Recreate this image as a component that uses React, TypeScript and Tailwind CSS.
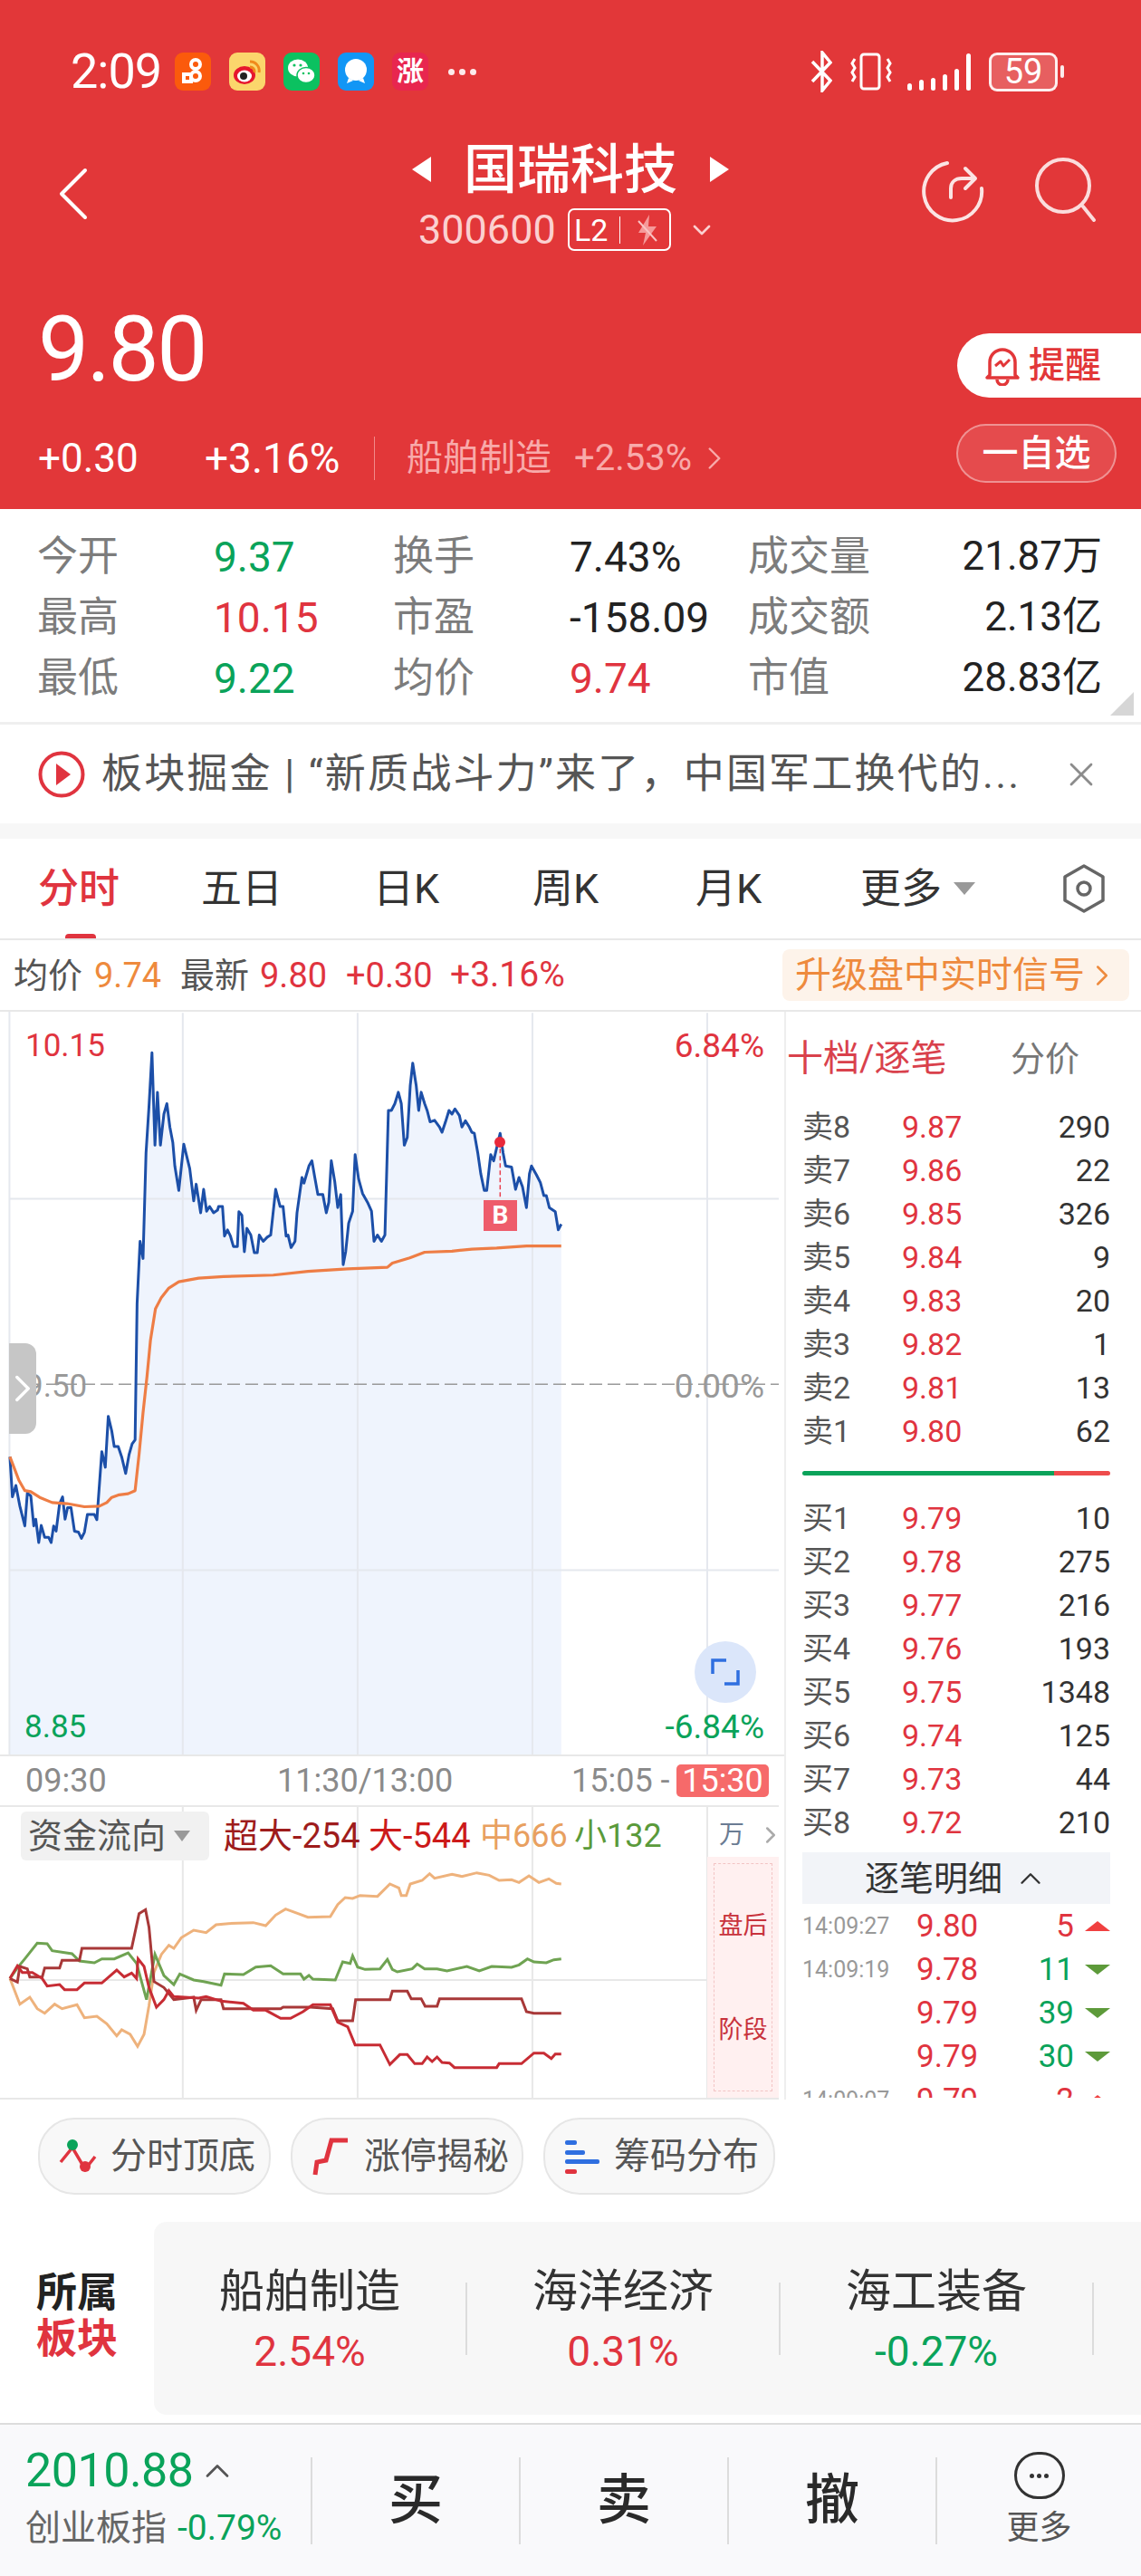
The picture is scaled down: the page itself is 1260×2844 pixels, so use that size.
import { ChevronRight, ChevronUp, ChevronDown, X } from "lucide-react";

const BLUE = "20,885 25,962 32,940 40,980 50,1018 55,955 62,960 68,1018 72,1005 78,1050 83,1017 90,1040 98,1040 103,1050 108,1018 113,1028 120,975 126,962 131,1005 136,983 143,983 150,1028 158,1030 164,1042 170,1030 176,996 190,996 195,1006 205,875 212,905 218,807 225,835 230,865 238,865 245,885 253,917 260,880 266,860 272,852 276,590 282,470 288,503 294,300 300,210 306,107 312,285 317,183 323,285 330,225 336,205 342,250 348,280 352,325 360,372 370,283 382,330 390,392 395,360 404,415 410,370 416,412 422,403 430,415 438,410 440,403 448,403 452,460 458,448 464,460 470,480 478,480 481,413 487,420 492,490 497,445 505,458 512,492 518,492 522,458 530,470 538,462 545,458 555,370 564,403 570,403 576,460 580,458 586,482 594,470 598,415 608,347 612,358 622,325 628,315 634,348 640,380 650,380 657,415 662,395 667,315 674,355 680,405 686,380 691,515 696,490 702,435 710,412 715,303 722,350 730,378 740,395 748,412 753,470 760,458 768,470 775,458 782,218 788,218 795,205 802,183 808,205 814,285 820,270 826,170 831,127 838,170 843,218 848,183 855,205 860,218 866,240 875,237 885,250 890,260 897,240 904,218 910,225 916,215 925,228 930,250 937,238 945,250 950,260 955,262 962,300 968,340 975,372 980,372 988,303 994,315 1000,290 1007,262 1013,300 1018,325 1030,327 1038,370 1045,347 1052,365 1060,405 1066,340 1070,325 1080,342 1088,357 1095,382 1100,382 1106,405 1118,413 1124,448 1130,437";
const AVG = "20,885 28,905 38,930 50,950 62,952 80,963 105,973 135,975 170,981 200,980 215,973 225,963 240,958 258,956 272,950 280,880 288,800 296,730 303,660 313,600 325,578 340,560 360,548 400,541 450,538 550,535 620,528 700,523 780,520 790,512 825,502 855,491 910,489 950,485 1000,483 1060,479 1130,479";
const FLOW_MID = "20,610 40,695 60,672 75,710 90,725 110,695 125,710 155,697 170,740 195,735 215,760 235,800 245,780 262,795 277,835 290,795 300,700 310,590 325,530 340,500 350,510 365,475 390,450 415,458 435,432 460,428 510,425 535,435 555,400 575,380 600,395 620,407 665,405 680,365 695,342 710,345 725,335 760,338 785,297 803,310 808,335 818,335 826,297 850,285 865,263 875,278 910,265 930,272 960,260 985,268 1005,285 1030,283 1045,292 1065,270 1085,292 1105,280 1120,295 1130,297";
const FLOW_SMALL = "20,610 35,575 50,545 75,493 95,495 105,518 145,528 160,552 190,558 205,545 230,545 258,525 275,560 295,680 312,530 330,600 350,630 362,595 390,615 410,620 445,632 452,595 490,597 515,572 545,568 570,595 605,595 612,612 622,600 630,612 675,615 690,555 705,560 710,535 720,572 735,580 765,578 780,547 790,580 800,588 830,578 840,562 855,578 880,578 900,585 940,570 965,585 990,570 1030,573 1045,565 1062,545 1075,555 1100,558 1115,548 1130,545";
const FLOW_XL = "20,610 35,622 40,570 55,578 60,605 85,605 90,575 120,575 125,550 160,550 165,510 265,510 280,395 293,382 300,440 310,620 330,640 350,680 390,672 395,715 405,680 445,680 450,710 505,710 565,710 570,705 625,705 670,710 680,750 710,750 716,680 785,680 790,652 820,652 828,677 848,677 856,702 880,702 885,677 1050,677 1060,720 1075,725 1130,725";
const FLOW_L = "20,610 35,568 45,590 65,590 85,610 95,635 120,630 130,647 155,647 170,625 205,625 235,582 250,605 265,592 275,610 278,545 290,570 300,640 315,705 330,680 340,650 350,670 400,675 415,670 445,685 490,692 510,715 535,715 565,742 585,742 610,720 630,697 665,697 680,755 700,770 715,830 765,830 785,895 805,862 820,862 835,892 850,892 860,870 870,885 880,870 890,888 905,890 915,905 1000,905 1005,892 1050,892 1075,857 1095,857 1110,875 1118,860 1130,860";

const SELLS = [
  ["卖8", "9.87", "290"], ["卖7", "9.86", "22"], ["卖6", "9.85", "326"], ["卖5", "9.84", "9"],
  ["卖4", "9.83", "20"], ["卖3", "9.82", "1"], ["卖2", "9.81", "13"], ["卖1", "9.80", "62"],
];
const BUYS = [
  ["买1", "9.79", "10"], ["买2", "9.78", "275"], ["买3", "9.77", "216"], ["买4", "9.76", "193"],
  ["买5", "9.75", "1348"], ["买6", "9.74", "125"], ["买7", "9.73", "44"], ["买8", "9.72", "210"],
];
const TICKS = [
  ["14:09:27", "9.80", "5", "up"], ["14:09:19", "9.78", "11", "down"], ["", "9.79", "39", "down"],
  ["", "9.79", "30", "down"], ["14:09:07", "9.79", "2", "up"],
];
const STATS = [
  ["今开", "9.37", "text-[#0aa35a]", "换手", "7.43%", "text-[#222]", "成交量", "21.87万"],
  ["最高", "10.15", "text-[#e0343f]", "市盈", "-158.09", "text-[#222]", "成交额", "2.13亿"],
  ["最低", "9.22", "text-[#0aa35a]", "均价", "9.74", "text-[#e0343f]", "市值", "28.83亿"],
];
const SECTORS = [
  ["船舶制造", "2.54%", "text-[#e0343f]"],
  ["海洋经济", "0.31%", "text-[#e0343f]"],
  ["海工装备", "-0.27%", "text-[#0aa35a]"],
];

function AppIcon({ className, children }: { className: string; children: React.ReactNode }) {
  return <div className={`w-[40px] h-[42px] rounded-[9px] flex items-center justify-center overflow-hidden ${className}`}>{children}</div>;
}

function StatusBar() {
  return (
    <div className="h-[158px] flex items-center pl-[78px] pr-[85px] text-white">
      <span className="text-[54px] leading-none w-[115px] tracking-[-1px]">2:09</span>
      <div className="flex gap-[20px]">
        <AppIcon className="bg-[#fb5a0c]">
          <svg width="26" height="32" viewBox="0 0 26 32" fill="none" stroke="#fff" strokeWidth="4">
            <circle cx="16" cy="8" r="5" /><circle cx="16" cy="21" r="5" /><path d="M11 19H3v8h8z" />
          </svg>
        </AppIcon>
        <AppIcon className="bg-[#fbd66c]">
          <svg width="34" height="34" viewBox="0 0 34 34">
            <ellipse cx="14" cy="21" rx="12" ry="10" fill="#e6162d" />
            <ellipse cx="14" cy="22" rx="8" ry="6.5" fill="#fff" />
            <circle cx="13" cy="22" r="4" fill="#222" />
            <path d="M20 6a10 10 0 0 1 10 12" fill="none" stroke="#f08a1c" strokeWidth="3" />
            <path d="M20 12a5 5 0 0 1 5 6" fill="none" stroke="#f08a1c" strokeWidth="3" />
          </svg>
        </AppIcon>
        <AppIcon className="bg-[#0bc160]">
          <svg width="32" height="30" viewBox="0 0 32 30" fill="#fff">
            <ellipse cx="12" cy="11" rx="11" ry="9.5" />
            <ellipse cx="21" cy="19" rx="10" ry="8.5" stroke="#0bc160" strokeWidth="1.5" />
            <circle cx="8" cy="8" r="1.6" fill="#0bc160" /><circle cx="15" cy="8" r="1.6" fill="#0bc160" />
            <circle cx="18" cy="17" r="1.3" fill="#0bc160" /><circle cx="24" cy="17" r="1.3" fill="#0bc160" />
          </svg>
        </AppIcon>
        <AppIcon className="bg-[#1296f5]">
          <svg width="30" height="32" viewBox="0 0 30 32" fill="#fff">
            <circle cx="15" cy="14" r="12" />
            <path d="M7 23l-2 6 7-3z" /><path d="M23 23l2 6-7-3z" />
          </svg>
        </AppIcon>
        <AppIcon className="bg-[#e8264f]">
          <span className="text-[30px] leading-none font-bold text-white">涨</span>
        </AppIcon>
      </div>
      <div className="ml-[22px] flex gap-[5px]">
        <div className="w-[7px] h-[7px] rounded-full bg-white/90" />
        <div className="w-[7px] h-[7px] rounded-full bg-white/90" />
        <div className="w-[7px] h-[7px] rounded-full bg-white/90" />
      </div>
      <div className="ml-auto flex items-center">
        <svg width="24" height="46" viewBox="0 0 24 46" fill="none" stroke="#fff" strokeWidth="3.5">
          <path d="M2 12l20 21-9 11V2l9 11L2 34" />
        </svg>
        <svg className="ml-[18px]" width="50" height="44" viewBox="0 0 50 44" fill="none" stroke="#fff" strokeWidth="3">
          <rect x="14" y="3" width="20" height="38" rx="3" />
          <path d="M7 8l-3 5 3 5-3 5 3 5-3 5M43 8l3 5-3 5 3 5-3 5 3 5" />
        </svg>
        <div className="ml-[15px] flex items-end gap-[8px] h-[42px] w-[74px]">
          {[8, 12, 14, 18, 24, 41].map((h, i) => (
            <div key={i} className="w-[5px] bg-white rounded-full" style={{ height: h }} />
          ))}
        </div>
        <div className="ml-[16px] w-[76px] h-[43px] rounded-[9px] border-[3px] border-white/90 bg-white/20 flex items-center justify-center text-[38px] leading-none">59</div>
        <div className="ml-[3px] w-[4px] h-[14px] bg-white/90 rounded-full" />
      </div>
    </div>
  );
}

function Header() {
  return (
    <div className="h-[562px] bg-[#e23739] text-white">
      <StatusBar />
      <div className="h-[132px] grid grid-cols-[1fr_350px_1fr]">
        <div className="pl-[64px] pt-[27px]">
          <svg width="34" height="58" viewBox="0 0 34 58" fill="none" stroke="#fff" strokeWidth="4" strokeLinecap="round" strokeLinejoin="round">
            <path d="M30 3L4 29l26 26" />
          </svg>
        </div>
        <div className="flex flex-col items-center -mt-[1px]">
          <div className="h-[60px] flex items-center justify-between w-full">
            <div className="w-0 h-0 border-y-[14px] border-y-transparent border-r-[21px] border-r-white" />
            <span className="text-[59px] leading-none font-medium">国瑞科技</span>
            <div className="w-0 h-0 border-y-[14px] border-y-transparent border-l-[21px] border-l-white" />
          </div>
          <div className="mt-[13px] flex items-center self-start pl-[7px] h-[47px]">
            <span className="text-[45px] leading-none text-[#fbd0d0] w-[165px]">300600</span>
            <div className="w-[114px] h-[47px] rounded-[7px] border-2 border-white flex items-center">
              <span className="ml-[5px] text-[34px] leading-none w-[50px]">L2</span>
              <div className="w-[1px] h-[30px] bg-white" />
              <svg className="ml-[17px]" width="26" height="36" viewBox="0 0 26 36" fill="#f59a9a">
                <path d="M15 1L3 21h8L8 35l15-21h-9z" />
                <path d="M3 8l20 22" stroke="#f9c4c4" strokeWidth="2" />
              </svg>
            </div>
            <ChevronDown className="ml-[18px] text-[#fbd0d0]" size={32} strokeWidth={2} />
          </div>
        </div>
        <div className="flex justify-end pr-[48px] pt-[18px] gap-[54px]">
          <svg width="70" height="70" viewBox="0 0 70 70" fill="none" stroke="#fbe4e4" strokeWidth="4" strokeLinecap="round" strokeLinejoin="round">
            <path d="M28 4A32 32 0 1 0 66 32" />
            <path d="M32 42V32c0-7 5-11 12-11h14" />
            <path d="M48 10l11 11-11 11" />
          </svg>
          <svg width="70" height="72" viewBox="0 0 70 72" fill="none" stroke="#fbdcdc" strokeWidth="4" strokeLinecap="round" className="-mt-[3px]">
            <circle cx="32" cy="32" r="29" />
            <path d="M54 55l12 15" />
          </svg>
        </div>
      </div>
      <div className="h-[272px] flex justify-between">
        <div className="pl-[42px]">
          <div className="mt-[46px] h-[100px] flex items-center text-[100px] leading-none tracking-[-2.5px]">9.80</div>
          <div className="mt-[40px] h-[60px] flex items-center text-[44px] leading-none">
            <span className="w-[184px]">+0.30</span>
            <span className="w-[187px] text-[46px]">+3.16%</span>
            <div className="w-[1px] h-[48px] bg-[#f28a8a]" />
            <span className="ml-[35px] text-[40px] text-[#f8aaaa] w-[185px]">船舶制造</span>
            <span className="text-[40px] text-[#f8aaaa] w-[140px]">+2.53%</span>
            <ChevronRight className="-ml-[6px] text-[#f8aaaa]" size={42} strokeWidth={1.4} />
          </div>
        </div>
        <div className="flex flex-col items-end pt-[78px] gap-[29px]">
          <div className="w-[203px] h-[71px] bg-white rounded-l-full flex items-center pl-[30px] text-[#e23739] text-[40px] leading-none font-medium">
            <svg width="40" height="44" viewBox="0 0 40 44" fill="none" stroke="#e23739" strokeWidth="3.5" strokeLinejoin="round">
              <path d="M6 32V18a14 14 0 0 1 28 0v14l3 3H3z" />
              <path d="M14 37a6 6 0 0 0 12 0" />
              <path d="M12 22l6-5 3 5 7-7" strokeWidth="3" />
            </svg>
            <span className="ml-[9px]">提醒</span>
          </div>
          <div className="mr-[27px] w-[177px] h-[65px] rounded-full border-2 border-white/40 bg-white/10 flex items-center justify-center text-[40px] leading-none font-medium">
            <span>一自选</span>
          </div>
        </div>
      </div>
    </div>
  );
}

function Stats() {
  return (
    <div className="relative h-[238px] pt-[19px] pl-[41px] pr-[43px] border-b-[3px] border-[#efefef]">
      {STATS.map((r) => (
        <div key={r[0]} className="h-[67px] grid grid-cols-[195px_198px_195px_199px_1fr] items-center text-[46px] leading-none">
          <span className="text-[45px] text-[#7c7c7c]">{r[0]}</span>
          <span className={r[2]}>{r[1]}</span>
          <span className="text-[45px] text-[#7c7c7c]">{r[3]}</span>
          <span className={r[5]}>{r[4]}</span>
          <div className="flex justify-between">
            <span className="text-[45px] text-[#7c7c7c] -ml-[2px]">{r[6]}</span>
            <span className="text-[44px] text-[#222] whitespace-nowrap">{r[7]}</span>
          </div>
        </div>
      ))}
      <div className="absolute right-[8px] bottom-[7px] w-0 h-0 border-b-[26px] border-b-[#d6d6d6] border-l-[26px] border-l-transparent" />
    </div>
  );
}

function News() {
  return (
    <div className="h-[109px] flex items-center pl-[42px] pr-[44px]">
      <svg width="52" height="52" viewBox="0 0 52 52" fill="none">
        <circle cx="26" cy="26" r="23.5" stroke="#e0343f" strokeWidth="4" />
        <path d="M20 14l16 12-16 12z" fill="#e0343f" />
      </svg>
      <span className="ml-[18px] text-[45px] leading-none tracking-[2.2px] text-[#555] whitespace-nowrap">板块掘金 | “新质战斗力”来了，中国军工换代的...</span>
      <X className="ml-auto text-[#8c8c8c]" size={44} strokeWidth={1.5} />
    </div>
  );
}

function Tabs() {
  return (
    <div className="relative h-[112px] pl-[42px] flex items-center border-b-2 border-[#e8e8e8] text-[#333] text-[45px] leading-none">
      <span className="w-[180px] text-[#e0343f] font-medium">分时</span>
      <span className="w-[190px]">五日</span>
      <span className="w-[176px]">日K</span>
      <span className="w-[180px]">周K</span>
      <span className="w-[182px]">月K</span>
      <div className="w-[223px] flex items-center">
        <span>更多</span>
        <div className="ml-[13px] w-0 h-0 border-x-[12px] border-x-transparent border-t-[14px] border-t-[#999]" />
      </div>
      <svg width="48" height="54" viewBox="0 0 48 54" fill="none" stroke="#666" strokeWidth="3.5">
        <path d="M24 2l21 12v26L24 52 3 40V14z" strokeLinejoin="round" />
        <circle cx="24" cy="27" r="7" />
      </svg>
      <div className="absolute left-[72px] bottom-0 w-[34px] h-[5px] bg-[#e0343f] rounded-t-sm" />
    </div>
  );
}

function InfoLine() {
  return (
    <div className="h-[79px] flex items-center pl-[15px] pr-[13px] border-b-2 border-[#e8e8e8] text-[38px] leading-none whitespace-nowrap">
      <span className="w-[89px] text-[#555]">均价</span>
      <span className="w-[95px] text-[#ee8a3d]">9.74</span>
      <span className="w-[88px] text-[#555]">最新</span>
      <span className="w-[95px] text-[#e0343f]">9.80</span>
      <span className="w-[115px] text-[#e0343f]">+0.30</span>
      <span className="text-[#e0343f] text-[39px]">+3.16%</span>
      <div className="ml-auto w-[383px] h-[57px] rounded-[8px] bg-[#fdf3ea] flex items-center pl-[14px] text-[#ee8a3d] text-[40px]">
        <span>升级盘中实时信号</span>
        <ChevronRight size={38} strokeWidth={1.6} />
      </div>
    </div>
  );
}

function PriceChart() {
  return (
    <div className="relative w-[860px] h-[820px]">
      <svg className="absolute inset-0 w-full h-full" viewBox="0 28 1568 1430" preserveAspectRatio="none">
        <polygon points={`${BLUE} 1130,1458 20,1458`} fill="#eff4fd" />
        <g stroke="#e5e8ee" strokeWidth="2">
          {[368, 720, 1072, 1424].map((x) => (
            <line key={x} x1={x} y1="30" x2={x} y2="1458" vectorEffect="non-scaling-stroke" />
          ))}
          {[388, 1103].map((y) => (
            <line key={y} x1="20" y1={y} x2="1568" y2={y} vectorEffect="non-scaling-stroke" />
          ))}
          <line x1="19" y1="28" x2="19" y2="1458" vectorEffect="non-scaling-stroke" />
        </g>
        <line x1="20" y1="745" x2="1568" y2="745" stroke="#999" strokeWidth="1.5" strokeDasharray="14 6" vectorEffect="non-scaling-stroke" />
        <polyline points={BLUE} fill="none" stroke="#1c4fa8" strokeWidth="3" strokeLinejoin="round" vectorEffect="non-scaling-stroke" />
        <polyline points={AVG} fill="none" stroke="#ee7d45" strokeWidth="3.2" strokeLinejoin="round" vectorEffect="non-scaling-stroke" />
        <line x1="1007" y1="278" x2="1007" y2="385" stroke="#e9404e" strokeWidth="1.5" strokeDasharray="5 3" vectorEffect="non-scaling-stroke" />
      </svg>
      <span className="absolute left-[28px] top-[20px] text-[35px] leading-none text-[#e0343f]">10.15</span>
      <span className="absolute right-[16px] top-[19px] text-[37px] leading-none text-[#e0343f]">6.84%</span>
      <span className="absolute left-[28px] top-[396px] text-[35px] leading-none text-[#999]">9.50</span>
      <span className="absolute right-[16px] top-[395px] text-[37px] leading-none text-[#999]">0.00%</span>
      <span className="absolute left-[27px] top-[772px] text-[35px] leading-none text-[#0aa35a]">8.85</span>
      <span className="absolute right-[16px] top-[771px] text-[37px] leading-none text-[#0aa35a]">-6.84%</span>
      <div className="absolute left-[10px] top-[366px] w-[30px] h-[100px] bg-[#c6c6c6] rounded-r-[12px] flex items-center justify-center">
        <ChevronRight className="text-white shrink-0" size={50} strokeWidth={1.6} />
      </div>
      <div className="absolute left-[546px] top-[138px] w-[12px] h-[12px] rounded-full bg-[#e9293a]" />
      <div className="absolute left-[534px] top-[208px] w-[37px] h-[34px] bg-[#ee5c6b] flex items-center justify-center text-white text-[28px] leading-none font-bold">B</div>
      <div className="absolute left-[767px] top-[695px] w-[68px] h-[68px] rounded-full bg-[#dbe6fa] flex items-center justify-center">
        <svg width="32" height="32" viewBox="0 0 32 32" fill="none" stroke="#2f6fe0" strokeWidth="3.5">
          <path d="M2 18V3h15M30 14v15H15" />
        </svg>
      </div>
    </div>
  );
}

function TimeAxis() {
  return (
    <div className="relative h-[56px] flex items-center pl-[28px] pr-[10px] border-t-2 border-[#e8e8e8] text-[36px] leading-none text-[#8a8a8a]">
      <span className="w-[278px]">09:30</span>
      <span className="w-[325px]">11:30/13:00</span>
      <span className="w-[116px] whitespace-nowrap">15:05 -</span>
      <span className="w-[102px] h-[36px] rounded-[5px] bg-[#f66a6a] text-white flex items-center justify-center">15:30</span>
    </div>
  );
}

function FundFlow() {
  return (
    <div className="relative h-[325px] w-[860px] border-y-2 border-[#e8e8e8] overflow-hidden">
      <svg className="absolute left-0 top-[-14px] w-[860px] h-[400px]" viewBox="0 0 1568 1200" preserveAspectRatio="none">
        <g stroke="#e8e8e8" strokeWidth="2">
          {[368, 720, 1072].map((x) => (
            <line key={x} x1={x} y1="40" x2={x} y2="1010" vectorEffect="non-scaling-stroke" />
          ))}
          <line x1="1424" y1="40" x2="1424" y2="1010" vectorEffect="non-scaling-stroke" />
          <line x1="18" y1="615" x2="1424" y2="615" vectorEffect="non-scaling-stroke" />
        </g>
        <polyline points={FLOW_MID} fill="none" stroke="#eeb27c" strokeWidth="3" vectorEffect="non-scaling-stroke" />
        <polyline points={FLOW_SMALL} fill="none" stroke="#6fa352" strokeWidth="3" vectorEffect="non-scaling-stroke" />
        <polyline points={FLOW_XL} fill="none" stroke="#a83838" strokeWidth="3" vectorEffect="non-scaling-stroke" />
        <polyline points={FLOW_L} fill="none" stroke="#c72c34" strokeWidth="3" vectorEffect="non-scaling-stroke" />
      </svg>
      <div className="relative flex items-center pt-[5px] pl-[23px] h-[58px] text-[38px] leading-none whitespace-nowrap">
        <div className="w-[208px] h-[54px] rounded-[6px] bg-[#f1f1f1] flex items-center pl-[8px] text-[#555]">
          <span>资金流向</span>
          <div className="ml-[9px] w-0 h-0 border-x-[9px] border-x-transparent border-t-[12px] border-t-[#999]" />
        </div>
        <span className="ml-[16px] w-[160px] text-[#9e1c1c]">超大-254</span>
        <span className="w-[123px] text-[#cc1a1a]">大-544</span>
        <span className="w-[104px] text-[36px] text-[#e8a060]">中666</span>
        <span className="text-[36px] text-[#5a9a3a]">小132</span>
      </div>
      <span className="absolute left-[794px] top-[17px] text-[28px] leading-none text-[#6b7c93]">万</span>
      <ChevronRight className="absolute left-[836px] top-[16px] text-[#aaa]" size={30} strokeWidth={2} />
      <div className="absolute left-[781px] top-[55px] bottom-0 w-[79px] bg-[#fff0f0] p-[7px]">
        <div className="h-full border border-dashed border-[#f3c4c4] flex flex-col items-center text-[27px] leading-none text-[#c8323c]">
          <span className="mt-[55px]">盘后</span>
          <span className="mt-[88px]">阶段</span>
        </div>
      </div>
    </div>
  );
}

function Triangle({ dir }: { dir: string }) {
  if (dir === "up") {
    return <div className="w-0 h-0 border-x-[14px] border-x-transparent border-b-[11px] border-b-[#f04040]" />;
  }
  return <div className="w-0 h-0 border-x-[14px] border-x-transparent border-t-[11px] border-t-[#5d9a3a]" />;
}

function QuoteRow({ row }: { row: string[] }) {
  return (
    <div className="h-[48px] flex items-center text-[34px] leading-none">
      <span className="w-[110px] text-[#555]">{row[0]}</span>
      <span className="w-[86px] text-[#e0343f]">{row[1]}</span>
      <span className="flex-1 text-right text-[#333]">{row[2]}</span>
    </div>
  );
}

function OrderBook() {
  return (
    <div className="w-[394px] border-l-2 border-[#eeeeee] h-[1201px] overflow-hidden">
      <div className="h-[103px] pl-[1px] flex items-center text-[40px] leading-none">
        <span className="w-[247px] text-[#d9414c]">十档/逐笔</span>
        <span className="text-[38px] text-[#777]">分价</span>
      </div>
      <div className="pl-[18px] pr-[34px]">
        {SELLS.map((r) => <QuoteRow key={r[0]} row={r} />)}
      </div>
      <div className="mt-[20px] ml-[18px] mr-[32px] w-[340px] h-[5px] flex rounded-full overflow-hidden">
        <div className="w-[278px] bg-[#0aa35a]" />
        <div className="flex-1 bg-[#ee4c4c]" />
      </div>
      <div className="mt-[23px] pl-[18px] pr-[34px]">
        {BUYS.map((r) => <QuoteRow key={r[0]} row={r} />)}
      </div>
      <div className="mt-[9px] ml-[18px] w-[340px] h-[57px] bg-[#f2f4f8] flex items-center justify-center text-[38px] leading-none text-[#333]">
        <span>逐笔明细</span>
        <ChevronUp className="ml-[12px]" size={38} strokeWidth={1.5} />
      </div>
      <div className="h-[214px] overflow-hidden pl-[18px] pr-[34px]">
        {TICKS.map((t, i) => (
          <div key={i} className="h-[48px] flex items-center leading-none">
            <span className="w-[126px] text-[25px] text-[#999]">{t[0]}</span>
            <span className="w-[80px] text-[35px] text-[#e0343f]">{t[1]}</span>
            <span className={`flex-1 text-right text-[35px] ${t[3] === "up" ? "text-[#e0343f]" : "text-[#0aa35a]"}`}>{t[2]}</span>
            <div className="ml-[12px]"><Triangle dir={t[3]} /></div>
          </div>
        ))}
      </div>
    </div>
  );
}

function Shortcuts() {
  return (
    <div className="h-[135px] pt-[20px] pl-[42px] flex gap-[22px] items-start">
      <div className="w-[257px] h-[85px] rounded-[40px] border-2 border-[#e6e6e6] bg-[#f8f8f8] flex items-center pl-[20px] text-[40px] leading-none text-[#555]">
        <svg width="44" height="44" viewBox="0 0 44 44" fill="none" stroke="#e0343f" strokeWidth="3.5">
          <path d="M3 28l13-16 14 24 11-14" />
          <circle cx="16" cy="9" r="6" fill="#0aa35a" stroke="none" />
          <circle cx="30" cy="33" r="6" fill="#e0343f" stroke="none" />
        </svg>
        <span className="ml-[14px]">分时顶底</span>
      </div>
      <div className="w-[257px] h-[85px] rounded-[40px] border-2 border-[#e6e6e6] bg-[#f8f8f8] flex items-center pl-[22px] text-[40px] leading-none text-[#555]">
        <svg width="42" height="44" viewBox="0 0 42 44" fill="none" stroke="#e0343f" strokeWidth="5">
          <path d="M3 42l2-14 10-2 6-22h18" />
        </svg>
        <span className="ml-[15px]">涨停揭秘</span>
      </div>
      <div className="w-[256px] h-[85px] rounded-[40px] border-2 border-[#e6e6e6] bg-[#f8f8f8] flex items-center pl-[22px] text-[40px] leading-none text-[#555]">
        <svg width="40" height="40" viewBox="0 0 40 40">
          <rect x="0" y="2" width="13" height="5" rx="2" fill="#2f6fe0" />
          <rect x="0" y="13" width="22" height="5" rx="2" fill="#2f6fe0" />
          <rect x="0" y="23" width="38" height="5" rx="2" fill="#2f6fe0" />
          <rect x="0" y="34" width="13" height="5" rx="2" fill="#e0343f" />
        </svg>
        <span className="ml-[14px]">筹码分布</span>
      </div>
    </div>
  );
}

function Sectors() {
  return (
    <div className="h-[222px] flex items-start">
      <div className="w-[170px] h-[213px] pl-[40px] flex flex-col justify-center text-[45px] leading-[51px] font-bold">
        <span className="text-[#222] -mt-[5px]">所属</span>
        <span className="text-[#e0343f]">板块</span>
      </div>
      <div className="flex-1 h-[213px] rounded-l-[14px] bg-[#f7f7f7] flex items-center">
        {SECTORS.map((s) => (
          <div key={s[0]} className="w-[346px] h-[80px] flex flex-col items-center justify-between border-r-2 border-[#dcdcdc] leading-none">
            <span className="text-[50px] text-[#333] -mt-[15px]">{s[0]}</span>
            <span className={`text-[46px] -mb-[19px] ${s[2]}`}>{s[1]}</span>
          </div>
        ))}
      </div>
    </div>
  );
}

function Footer() {
  return (
    <div className="h-[170px] bg-[#f9f9fb] border-t-2 border-[#dcdcdc] flex items-start">
      <div className="w-[343px] h-[133px] pl-[28px] pt-[25px]">
        <div className="flex items-center text-[52px] leading-none text-[#0aa35a]">
          <span className="tracking-[-0.5px]">2010.88</span>
          <ChevronUp className="ml-[4px] text-[#555]" size={44} strokeWidth={1.5} />
        </div>
        <div className="mt-[18px] flex items-center leading-none whitespace-nowrap">
          <span className="text-[39px] text-[#666]">创业板指</span>
          <span className="ml-[12px] text-[39px] text-[#0aa35a]">-0.79%</span>
        </div>
      </div>
      {["买", "卖", "撤"].map((t) => (
        <div key={t} className="mt-[36px] w-[230px] h-[96px] border-l-2 border-[#dcdcdc] flex items-center justify-center text-[60px] leading-none font-medium text-[#2a2a2a]">
          {t}
        </div>
      ))}
      <div className="mt-[36px] flex-1 h-[96px] border-l-2 border-[#dcdcdc] flex flex-col items-center">
        <div className="-mt-[6px] w-[56px] h-[56px] rounded-full border-[3px] border-[#333] flex items-center justify-center gap-[3px]">
          <div className="w-[5px] h-[5px] rounded-full bg-[#333]" />
          <div className="w-[5px] h-[5px] rounded-full bg-[#333]" />
          <div className="w-[5px] h-[5px] rounded-full bg-[#333]" />
        </div>
        <span className="mt-[14px] text-[36px] leading-none text-[#555]">更多</span>
      </div>
    </div>
  );
}

export default function App() {
  return (
    <div className="w-[1260px] h-[2844px] overflow-hidden bg-white [font-family:Roboto,'Noto_Sans_CJK_SC',sans-serif]">
      <Header />
      <Stats />
      <News />
      <div className="h-[17px] bg-[#f7f7f7]" />
      <Tabs />
      <InfoLine />
      <div className="flex">
        <div className="w-[866px] shrink-0">
          <PriceChart />
          <TimeAxis />
          <FundFlow />
        </div>
        <OrderBook />
      </div>
      <Shortcuts />
      <Sectors />
      <Footer />
    </div>
  );
}
